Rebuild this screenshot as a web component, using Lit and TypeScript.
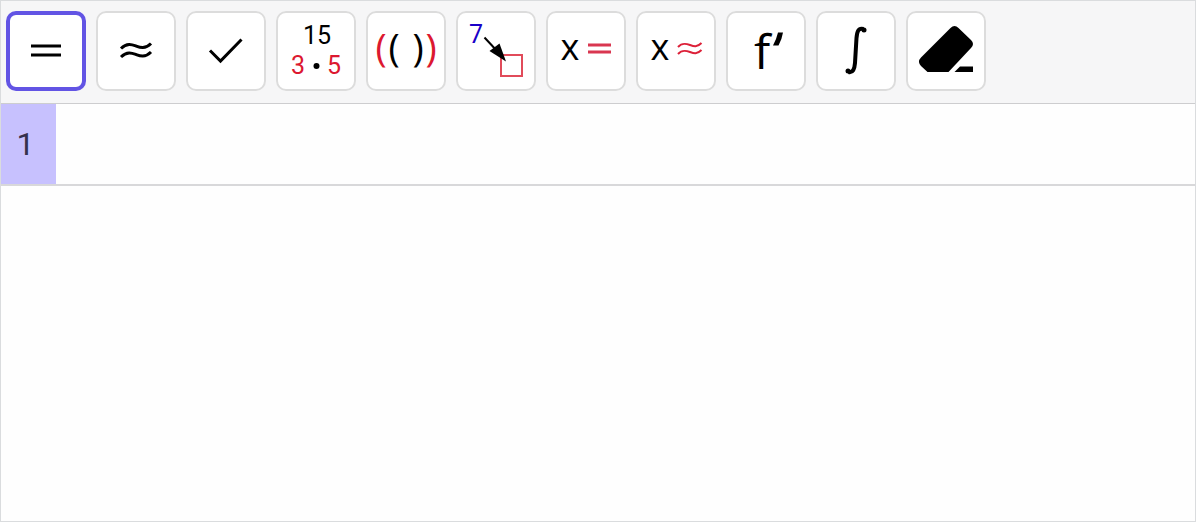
import { LitElement, html, svg, css, type TemplateResult } from "lit";
import { customElement, state } from "lit/decorators.js";

interface Tool {
  id: string;
  label: string;
  icon: TemplateResult;
}

const TOOLS: Tool[] = [
  {
    id: "evaluate",
    label: "Evaluate",
    icon: svg`<path class="line" d="M25 35H55M25 44H55"/>`,
  },
  {
    id: "numeric",
    label: "Numeric",
    icon: svg`<path class="line" d="M25 37.500C31 31.500 36 33.500 40 35S49 38.500 55 32.500M25 46C31 40 36 42 40 43.500S49 47 55 41"/>`,
  },
  {
    id: "keep",
    label: "Keep input",
    icon: svg`<path class="line" d="M24 39.500L34.500 50L55.500 28.500"/>`,
  },
  {
    id: "factor",
    label: "Factor",
    icon: svg`<text class="small" x="41" y="33">15</text>
      <text class="small red" x="22" y="63">3</text>
      <circle cx="40.500" cy="55" r="3"/>
      <text class="small red" x="58" y="63">5</text>`,
  },
  {
    id: "expand",
    label: "Expand",
    icon: svg`<text class="paren red" x="15" y="51">(</text>
      <text class="paren" x="28" y="51">(</text>
      <text class="paren" x="52" y="51">)</text>
      <text class="paren red" x="65" y="51">)</text>`,
  },
  {
    id: "substitute",
    label: "Substitute",
    icon: svg`<text class="small blue" x="20" y="32">7</text>
      <rect class="box" x="45" y="44" width="21" height="21"/>
      <path class="thin" d="M28.500 26.500L42 41"/>
      <path d="M50 50.500L33.500 40L43.500 32.500Z"/>`,
  },
  {
    id: "solve",
    label: "Solve",
    icon: svg`<text class="letter" x="24" y="49">x</text>
      <path class="line pink" d="M42 34H65M42 41H65"/>`,
  },
  {
    id: "nsolve",
    label: "Solve numerically",
    icon: svg`<text class="letter" x="24" y="49">x</text>
      <path class="wave" d="M42 36C46 31.500 50 32.500 54 34S61 36.500 65.500 32M42 43C46 38.500 50 39.500 54 41S61 43.500 65.500 39"/>`,
  },
  {
    id: "derivative",
    label: "Derivative",
    icon: svg`<text class="func" x="36" y="58">f</text>
      <path d="M52 21.500H57Q56 28 52.500 34.500H47Q50.500 28 52 21.500Z"/>`,
  },
  {
    id: "integral",
    label: "Integral",
    icon: svg`<path class="spine" d="M47.500 18C42 16.500 41 21 40.500 27L39 52C38.500 58 37 62 32.500 61"/>
      <circle cx="48" cy="19" r="2.500"/>
      <circle cx="32" cy="60" r="2.500"/>`,
  },
  {
    id: "delete",
    label: "Delete",
    icon: svg`<path d="M44.500 17Q48.500 13 52.500 17L65 29Q69 33 65 37L42.500 61H21.500L15 55Q11 50.500 15 46.500Z"/>
      <path d="M48.500 61L54 55.500H67V61Z"/>`,
  },
];

@customElement("app-root")
export class AppRoot extends LitElement {
  static styles = css`
    :host {
      display: block;
      font-family: "Open Sans", "Noto Sans", sans-serif;
    }
    .view {
      box-sizing: border-box;
      min-height: 100vh;
      border: 1px solid #dadcde;
      background: #fefefe;
    }
    .toolbar {
      display: flex;
      flex-wrap: wrap;
      gap: 10px;
      padding: 10px 5px 12px;
      background: #f6f6f7;
      border-bottom: 1px solid #cdcdcf;
    }
    .tool {
      display: block;
      width: 80px;
      height: 80px;
      padding: 0;
      border: 0;
      border-radius: 10px;
      background: #fff;
      box-shadow: inset 0 0 0 2px #dcdcdc;
      font: inherit;
      cursor: pointer;
    }
    .tool.selected {
      box-shadow: inset 0 0 0 4px #6254e4;
    }
    .icon {
      display: block;
      width: 80px;
      height: 80px;
      fill: #000;
    }
    .line,
    .wave,
    .thin,
    .spine,
    .box {
      fill: none;
      stroke: #000;
      stroke-width: 3px;
    }
    .spine {
      stroke-width: 4px;
    }
    .thin {
      stroke-width: 2px;
    }
    .box {
      stroke: #e14b5a;
      stroke-width: 2px;
    }
    .wave {
      stroke: #dc2038;
      stroke-width: 2px;
    }
    .line.pink {
      stroke: #d93650;
    }
    text {
      text-anchor: middle;
    }
    .small {
      font-family: Roboto, sans-serif;
      font-size: 25px;
    }
    .paren {
      font-size: 38px;
      font-weight: 500;
    }
    .letter {
      font-size: 36px;
      font-weight: 500;
    }
    .func {
      font-size: 48px;
      font-weight: 500;
    }
    .red {
      fill: #dc1830;
    }
    .blue {
      fill: #1a00c8;
    }
    .row {
      display: flex;
      height: 80px;
      border-bottom: 2px solid #d8d8da;
    }
    .number {
      display: grid;
      place-items: center;
      box-sizing: border-box;
      width: 55px;
      padding-right: 6px;
      background: #c7c1fe;
      color: #35314c;
      font-family: Roboto, sans-serif;
      font-size: 32px;
      line-height: 40px;
    }
    .entry {
      flex: 1;
      min-width: 0;
      padding: 0 16px;
      border: 0;
      outline: 0;
      background: transparent;
      font: inherit;
      font-size: 32px;
    }
  `;

  @state() private selected = "evaluate";

  render() {
    return html`
      <main class="view">
        <div class="toolbar" role="toolbar" aria-label="CAS tools">
          ${TOOLS.map(
            (tool) => html`<button
              type="button"
              class="tool ${tool.id === this.selected ? "selected" : ""}"
              aria-label=${tool.label}
              aria-pressed=${tool.id === this.selected}
              @click=${() => (this.selected = tool.id)}
            >
              <svg class="icon" viewBox="0 0 80 80" aria-hidden="true">${tool.icon}</svg>
            </button>`
          )}
        </div>
        <div class="row">
          <label class="number" for="entry-1">1</label>
          <input class="entry" id="entry-1" type="text" autocomplete="off" />
        </div>
      </main>
    `;
  }
}
